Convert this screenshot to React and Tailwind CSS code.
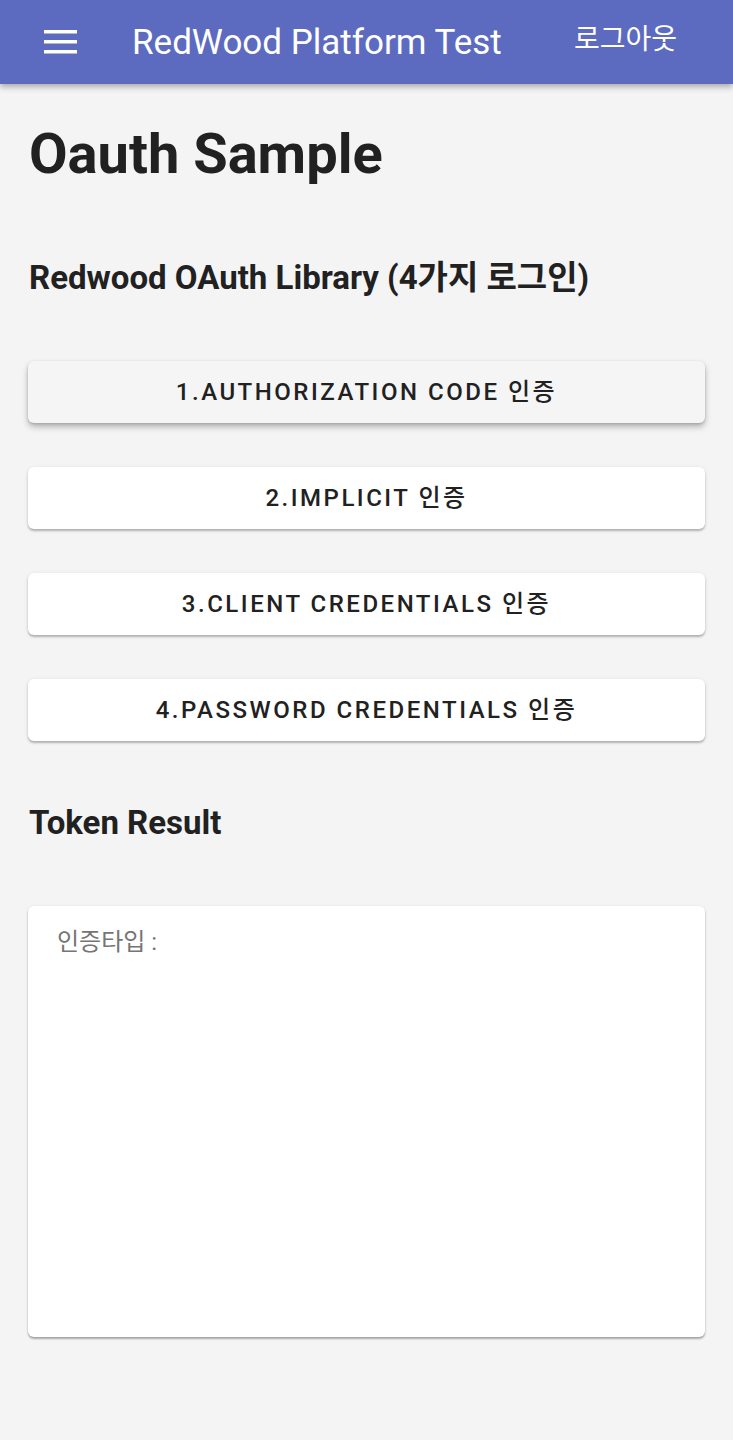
import React from "react";

const font = { fontFamily: 'Roboto, "Noto Sans CJK KR", sans-serif' };

function Btn({ children, active }) {
  return (
    <button
      className={
        active
          ? "w-full h-[62px] rounded-[6px] bg-[#f5f5f5] shadow-[0_4px_6px_rgba(0,0,0,0.25),0_1px_3px_rgba(0,0,0,0.15)] text-[24px] font-medium tracking-[0.105em] text-[#212121]"
          : "w-full h-[62px] rounded-[6px] bg-white shadow-[0_2px_2px_rgba(0,0,0,0.22),0_1px_4px_rgba(0,0,0,0.1)] text-[24px] font-medium tracking-[0.105em] text-[#212121]"
      }
    >
      {children}
    </button>
  );
}

export default function App() {
  return (
    <div className="min-h-[1440px] bg-[#f4f4f4]" style={font}>
      <header className="h-[84px] bg-[#5c6bc0] flex items-center shadow-[0_3px_6px_rgba(0,0,0,0.3)] relative z-10">
        <div className="w-[132px] flex pl-[44px]">
          <svg width="33" height="24" viewBox="0 0 33 24">
            <rect x="0" y="0" width="33" height="3.5" fill="white" />
            <rect x="0" y="10" width="33" height="3.5" fill="white" />
            <rect x="0" y="20" width="33" height="3.5" fill="white" />
          </svg>
        </div>
        <div className="flex-1 text-white text-[35px] leading-none">RedWood Platform Test</div>
        <div className="text-white text-[28px] leading-none pr-[56px] pb-[4px]">로그아웃</div>
      </header>
      <main className="px-[28px]">
        <h1 className="text-[56px] font-bold text-[#212121] leading-none mt-[42px] pl-[1px]">
          Oauth Sample
        </h1>
        <h2 className="text-[33px] font-bold text-[#212121] leading-none mt-[79px] pl-[1px]">
          Redwood OAuth Library (4가지 로그인)
        </h2>
        <div className="flex flex-col gap-[44px] mt-[67px]">
          <Btn active>1.AUTHORIZATION CODE 인증</Btn>
          <Btn>2.IMPLICIT 인증</Btn>
          <Btn>3.CLIENT CREDENTIALS 인증</Btn>
          <Btn>4.PASSWORD CREDENTIALS 인증</Btn>
        </div>
        <h2 className="text-[33px] font-bold text-[#212121] leading-none mt-[65px] pl-[1px]">
          Token Result
        </h2>
        <div className="mt-[67px] h-[431px] bg-white rounded-[6px] shadow-[0_2px_2px_rgba(0,0,0,0.3),0_0_3px_rgba(0,0,0,0.08)] px-[29px] pt-[18px]">
          <div className="text-[24px] text-[#757575]">인증타입 :</div>
        </div>
      </main>
    </div>
  );
}
